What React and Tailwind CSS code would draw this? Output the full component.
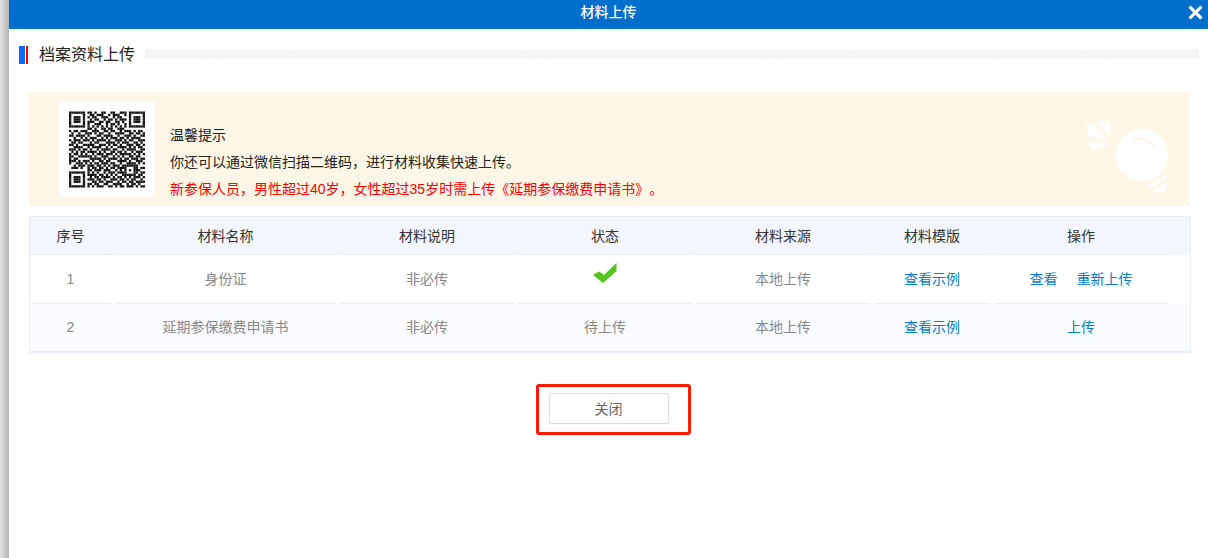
const FONT = '[font-family:"Liberation_Sans","Noto_Sans_CJK_SC",sans-serif]';

const QR_ROWS = [
  '111111101101001100110011101111111',
  '100000100110111001011100101000001',
  '101110101011001110010110001011101',
  '101110100101100101101011101011101',
  '101110101110011011001101001011101',
  '100000101001110010110100101000001',
  '111111101010101010101010101111111',
  '000000001101001101100111000000000',
  '101101110011100110110010111010110',
  '010010011101011001001111001101101',
  '110111101000110111100100111010011',
  '001001010111001010111011010111100',
  '101110111010111101001110101100111',
  '011011000101100011110101110011010',
  '110100111110011101011010011101101',
  '001111001011110010100111101010110',
  '111010110100101111011001011110011',
  '010101101111010100110110100101110',
  '101101010010111011101011111010101',
  '110011111101001110010101001101100',
  '101100000111110101111010110111011',
  '111010111010011011000111101001110',
  '100111010101101110110010011110101',
  '001011101110110101011101111111000',
  '011101001011011010110111100011011',
  '000000001101110111001010101011100',
  '111111101010100101110111100011011',
  '100000101111011010101001111110110',
  '101110100101101111010110101011101',
  '101110101110110100111011010110010',
  '101110100011011011100101101101111',
  '100000101101100110011110010110100',
  '111111101010111001101011011101011',
];

const COLUMNS = 'grid grid-cols-[81px_221px_174px_174px_174px_116px_174px] gap-x-[4px]';

const HEADERS = ['序号', '材料名称', '材料说明', '状态', '材料来源', '材料模版', '操作'];

function QrCode() {
  return (
    <svg width="76" height="77" viewBox="0 0 33 33" className="block">
      {QR_ROWS.flatMap((row, y) =>
        [...row].map((bit, x) =>
          bit === '1' ? <rect key={`${x}-${y}`} x={x} y={y} width="1" height="1" fill="#111" /> : null
        )
      )}
    </svg>
  );
}

function Bulb() {
  return (
    <svg width="84" height="73" viewBox="0 0 84 73" fill="#fff" className="block">
      <polygon points="11.7,0.3 24.3,0.3 27,16.3" />
      <polygon points="1,2 10,3 25,19.7 3,13" />
      <polygon points="0,19 25,22.3 8.3,28.7" />
      <circle cx="57" cy="33" r="26" />
      <polygon points="78,30 78,41 76,52 62,60 50,54" />
      <path d="M47.5 20 Q58 11 71 26" fill="none" stroke="#fef7e7" strokeWidth="2" />
      <line x1="64" y1="64.5" x2="80" y2="55.5" stroke="#fff" strokeWidth="4" strokeLinecap="round" />
      <path d="M67 69 L83 60 Q83 72 70 71 Z" />
    </svg>
  );
}

function Check() {
  return (
    <svg width="24" height="20" viewBox="0 0 24 20" className="block mb-[13px]">
      <polygon points="0,12 6,8.5 11,12 23.5,0 23.5,8 10,20" fill="#52c41a" />
    </svg>
  );
}

function Cell({ children, className = '' }) {
  return (
    <div className={`flex items-center justify-center border-b border-[#e8eef7] ${className}`}>
      {children}
    </div>
  );
}

function Link({ children, className = '' }) {
  return <span className={`text-[#0a7cc4] ${className}`}>{children}</span>;
}

export default function App() {
  return (
    <div className={`flex h-[558px] w-[1208px] overflow-hidden bg-white ${FONT}`}>
      <div className="w-[9px] shrink-0 bg-gradient-to-r from-[#e4e4e4] to-[#b4b4b4]" />

      <div className="flex min-w-0 flex-1 flex-col">
        {/* Header */}
        <div className="relative flex h-[29px] shrink-0 items-center justify-center bg-[#006fcc] pb-[5px] text-sm font-medium text-white">
          材料上传
          <svg width="15" height="15" viewBox="0 0 14 14" className="absolute right-[5px] top-[5px]">
            <path d="M1.5 1.5 L12.5 12.5 M12.5 1.5 L1.5 12.5" stroke="#fff" strokeWidth="3" />
          </svg>
        </div>

        {/* Section title */}
        <div className="mt-[17px] flex h-[18px] items-center pl-[10px] pr-[9px]">
          <div className="h-[18px] w-[6px] bg-[#0a6cff]" />
          <div className="ml-px h-[18px] w-[2px] bg-[#ff0000]" />
          <h2 className="ml-[11px] text-base leading-[18px] text-[#222]">档案资料上传</h2>
          <div className="mb-[2px] ml-[10px] h-[10px] flex-1 bg-[repeating-linear-gradient(135deg,#f3f4f7_0,#f3f4f7_2px,#f6f7f9_2px,#f6f7f9_4px)]" />
        </div>

        {/* Notice */}
        <div className="ml-[20px] mr-[19px] mt-[28px] flex h-[114px] items-center bg-[#fef7e7] pl-[30px] pr-[20px]">
          <div className="flex h-[96px] w-[96px] items-center justify-center bg-white pt-px">
            <QrCode />
          </div>
          <div className="ml-[15px] mt-[26px] text-sm leading-[27px] text-[#222] [text-spacing-trim:space-all]">
            <p>温馨提示</p>
            <p>你还可以通过微信扫描二维码，进行材料收集快速上传。</p>
            <p className="text-[#ff0000]">新参保人员，男性超过40岁，女性超过35岁时需上传《延期参保缴费申请书》。</p>
          </div>
          <div className="ml-auto mb-[-18px]">
            <Bulb />
          </div>
        </div>

        {/* Table */}
        <div className="ml-[20px] mr-[17px] mt-[10px] border border-b-2 border-[#e8eef7] text-sm text-[#888]">
          <div className="h-[38px] bg-[#f3f7fd]">
            <div className={`${COLUMNS} h-full`}>
              {HEADERS.map(title => (
                <Cell key={title} className="text-[#333]">{title}</Cell>
              ))}
            </div>
          </div>

          <div className="h-[49px] bg-white">
            <div className={`${COLUMNS} h-full`}>
              <Cell>1</Cell>
              <Cell>身份证</Cell>
              <Cell>非必传</Cell>
              <Cell><Check /></Cell>
              <Cell>本地上传</Cell>
              <Cell><Link>查看示例</Link></Cell>
              <Cell>
                <Link>查看</Link>
                <Link className="ml-[19px]">重新上传</Link>
              </Cell>
            </div>
          </div>

          <div className="flex h-[47px] bg-[#fafbff] pb-[2px]">
            <div className={`${COLUMNS} h-full`}>
              <div className="flex items-center justify-center">2</div>
              <div className="flex items-center justify-center">延期参保缴费申请书</div>
              <div className="flex items-center justify-center">非必传</div>
              <div className="flex items-center justify-center">待上传</div>
              <div className="flex items-center justify-center">本地上传</div>
              <div className="flex items-center justify-center"><Link>查看示例</Link></div>
              <div className="flex items-center justify-center"><Link>上传</Link></div>
            </div>
          </div>
        </div>

        {/* Close button with the red annotation box over it */}
        <div className="mt-[40px] flex justify-center">
          <div className="relative">
            <button className="block h-[31px] w-[120px] rounded-[2px] border border-[#dddddd] bg-white text-sm text-[#666]">
              关闭
            </button>
            <div className="absolute left-[-13px] top-[-9px] h-[51px] w-[155px] rounded-[3px] border-[3px] border-[#ff1a0a]" />
          </div>
        </div>
      </div>
    </div>
  );
}
